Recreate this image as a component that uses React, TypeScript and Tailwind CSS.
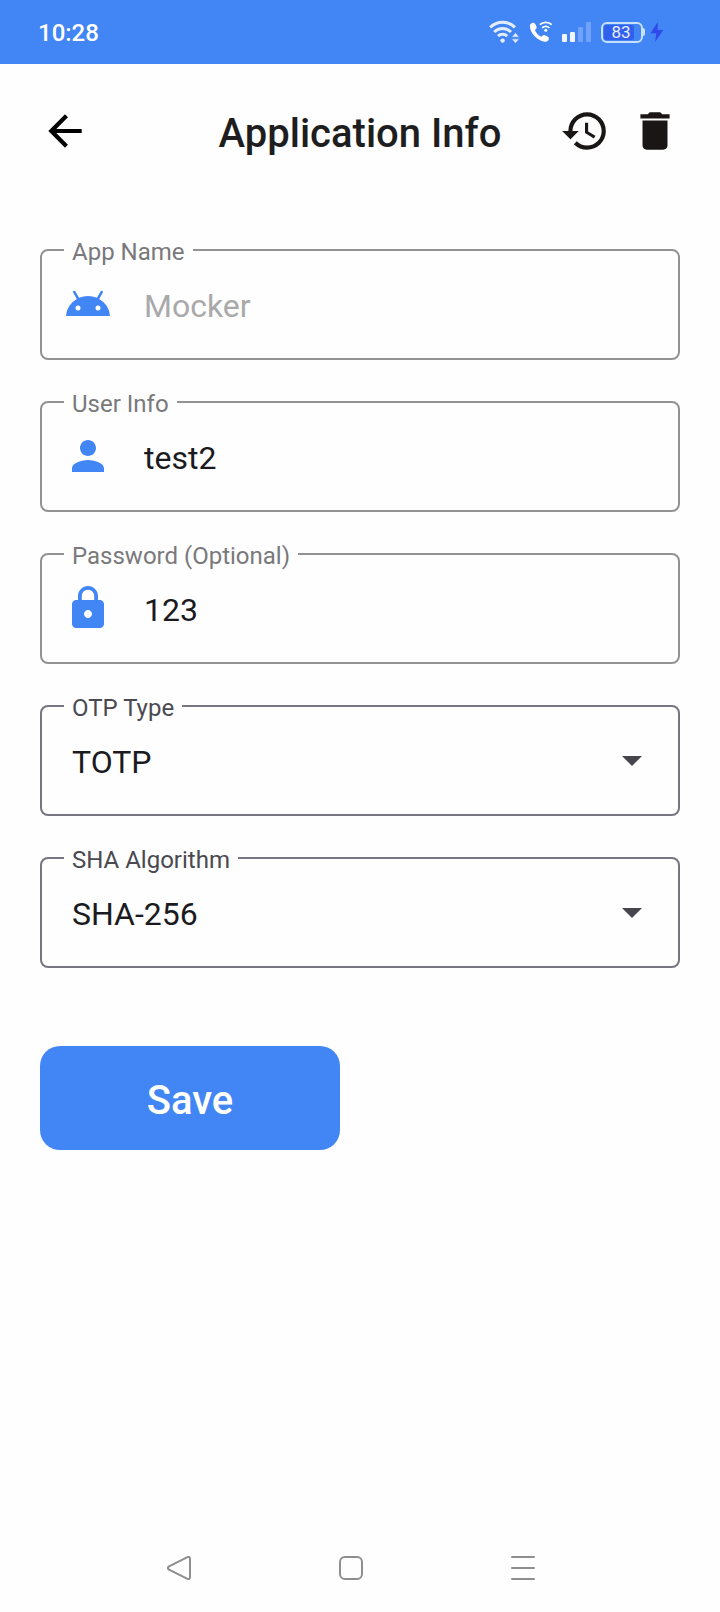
import { useId, useState, type ReactNode } from "react";
import {
  MdAndroid,
  MdArrowBack,
  MdArrowDropDown,
  MdDelete,
  MdHistory,
  MdLock,
  MdPerson,
} from "react-icons/md";

function WifiIcon() {
  return (
    <svg width="32" height="24" viewBox="0 0 32 24" fill="none" aria-hidden="true">
      <g stroke="#e3edfe" strokeWidth="3">
        <path d="M1.2 7.4a17.6 17.6 0 0 1 24.8 0" />
        <path d="M5.2 12a12 12 0 0 1 16.8 0" />
        <path d="M9 16.2a6.6 6.6 0 0 1 9.2 0" />
      </g>
      <circle cx="13.6" cy="20.6" r="2.2" fill="#e3edfe" />
      <path
        d="M26.5 12.6 30.6 17.2h-8.2zM26.5 23.4l4.1-4.6h-8.2z"
        fill="#e3edfe"
        stroke="#4285f4"
        strokeWidth="0.8"
      />
    </svg>
  );
}

function WifiCallIcon() {
  return (
    <svg width="24" height="24" viewBox="0 0 24 24" fill="none" aria-hidden="true">
      <path
        d="M1.2 4.6C2.2 3.2 3.6 2.4 4.8 2.8c1.2.5 2.4 2.7 2.8 4.4.3 1.2-.9 2.2-1.7 3 1.4 3 3.6 5.2 6.6 6.6.9-.9 2-2 3.2-1.6 1.6.4 3.6 1.5 4.1 2.6.5 1.3-.7 2.9-2 3.6C11.5 23.4-.8 13.3 1.2 4.6z"
        fill="#fff"
      />
      <g stroke="#fff" strokeWidth="1.8">
        <path d="M10.8 4.6a9 9 0 0 1 12 0" />
        <path d="M13.2 7.8a5.4 5.4 0 0 1 7.2 0" />
      </g>
      <circle cx="16.8" cy="10.2" r="1.5" fill="#fff" />
    </svg>
  );
}

function SignalIcon() {
  return (
    <svg width="30" height="24" viewBox="0 0 30 24" aria-hidden="true">
      <rect x="0" y="14" width="5" height="8" rx="1" fill="#f0f5ff" />
      <rect x="8" y="12" width="5" height="10" rx="1" fill="#f0f5ff" />
      <rect x="16" y="7" width="5" height="15" rx="1" fill="#6fa2f8" />
      <rect x="24" y="2" width="5" height="20" rx="1" fill="#6fa2f8" />
    </svg>
  );
}

function Battery({ level }: { level: number }) {
  return (
    <div className="flex items-center">
      <div className="flex h-[21px] w-[42px] items-center rounded-md border-2 border-[#c8e0fc] px-px">
        <span className="flex h-[15px] w-[30px] items-center justify-center rounded-xs bg-[#3260ee] pl-1 text-[17px] leading-4 text-[#e6effe]">
          {level}
        </span>
      </div>
      <div className="h-2 w-0.5 rounded-r-xs bg-[#c8e0fc]" />
    </div>
  );
}

function BoltIcon() {
  return (
    <svg width="14" height="22" viewBox="0 0 14 22" aria-hidden="true">
      <path d="M7.8 1 .5 12.2h5.7L5 21l8.3-12H7.6z" fill="#3049ec" />
    </svg>
  );
}

function StatusBar() {
  return (
    <div className="flex h-16 items-center justify-between bg-[#4285f4] pr-14 pl-[38px] text-white">
      <span className="pt-0.5 text-2xl font-medium">10:28</span>
      <div className="flex items-center">
        <WifiIcon />
        <span className="w-2" />
        <WifiCallIcon />
        <span className="w-[9px]" />
        <SignalIcon />
        <span className="w-[9px]" />
        <Battery level={83} />
        <span className="w-[5px]" />
        <BoltIcon />
      </div>
    </div>
  );
}

function Outline({
  id,
  label,
  tone,
  children,
}: {
  id: string;
  label: string;
  tone: string;
  children: ReactNode;
}) {
  return (
    <fieldset className={`min-w-0 rounded-lg border-2 px-[22px] pb-3.5 ${tone}`}>
      <legend className="px-2 pt-1 text-2xl leading-6">
        <label htmlFor={id}>{label}</label>
      </legend>
      {children}
    </fieldset>
  );
}

function TextField({
  label,
  icon,
  initial,
  disabled = false,
}: {
  label: string;
  icon: ReactNode;
  initial: string;
  disabled?: boolean;
}) {
  const id = useId();
  const [value, setValue] = useState(initial);
  return (
    <Outline id={id} label={label} tone="border-[#929294] text-[#79797b]">
      <div className="flex h-20 items-center gap-8">
        <span className="shrink-0 text-5xl text-[#4285f4]">{icon}</span>
        <input
          id={id}
          type="text"
          value={value}
          disabled={disabled}
          onChange={(e) => setValue(e.target.value)}
          className="h-12 w-full min-w-0 bg-transparent pt-1 text-[32px] text-[#1b1b1f] outline-none disabled:text-[#a9a9ab]"
        />
      </div>
    </Outline>
  );
}

function SelectField({
  label,
  options,
  initial,
}: {
  label: string;
  options: string[];
  initial: string;
}) {
  const id = useId();
  const [value, setValue] = useState(initial);
  return (
    <Outline id={id} label={label} tone="border-[#777680] text-[#4a4950]">
      <div className="grid h-20 items-center">
        <select
          id={id}
          value={value}
          onChange={(e) => setValue(e.target.value)}
          className="col-start-1 row-start-1 h-12 w-full appearance-none bg-transparent pt-0.5 pr-12 pl-2 text-[32px] text-[#1b1b1f] outline-none"
        >
          {options.map((o) => (
            <option key={o}>{o}</option>
          ))}
        </select>
        <MdArrowDropDown className="pointer-events-none col-start-1 row-start-1 size-12 justify-self-end text-[#47464f]" />
      </div>
    </Outline>
  );
}

export default function App() {
  return (
    <div className="flex min-h-screen flex-col bg-[#fefefe] font-[Roboto,sans-serif]">
      <StatusBar />
      <header className="grid grid-cols-[1fr_auto_1fr] items-center px-10 pt-[42px]">
        <button type="button" aria-label="Back" className="justify-self-start text-black">
          <MdArrowBack className="size-[50px]" />
        </button>
        <h1 className="pt-1.5 text-[40px] leading-[44px] font-medium text-[#1e1e20]">
          Application Info
        </h1>
        <div className="flex gap-5 justify-self-end text-[#1a1616]">
          <button type="button" aria-label="History">
            <MdHistory className="size-[50px]" />
          </button>
          <button type="button" aria-label="Delete">
            <MdDelete className="size-[50px]" />
          </button>
        </div>
      </header>
      <form
        className="flex flex-col gap-7 px-10 pt-20"
        onSubmit={(e) => e.preventDefault()}
      >
        <TextField label="App Name" icon={<MdAndroid />} initial="Mocker" disabled />
        <TextField label="User Info" icon={<MdPerson />} initial="test2" />
        <TextField label="Password (Optional)" icon={<MdLock />} initial="123" />
        <SelectField label="OTP Type" options={["TOTP", "HOTP"]} initial="TOTP" />
        <SelectField
          label="SHA Algorithm"
          options={["SHA-1", "SHA-256", "SHA-512"]}
          initial="SHA-256"
        />
        <button
          type="submit"
          className="mt-[50px] h-[104px] w-[300px] rounded-[20px] bg-[#4285f4] pt-1.5 text-[40px] font-medium text-white"
        >
          Save
        </button>
      </form>
      <nav className="mt-auto flex h-[88px] items-center justify-center gap-[148px] pr-[18px] text-[#8e8e8e]">
        <button type="button" aria-label="System back">
          <svg width="24" height="24" viewBox="0 0 24 24" fill="none" stroke="currentColor" strokeWidth="2">
            <path d="M2 10.4 20 1.3Q23 0 23 3v18q0 3-3 1.7L2 13.6q-2.2-1.6 0-3.2z" />
          </svg>
        </button>
        <button type="button" aria-label="Home">
          <svg width="24" height="24" viewBox="0 0 24 24" fill="none" stroke="currentColor" strokeWidth="2">
            <rect x="1" y="1" width="22" height="22" rx="5" />
          </svg>
        </button>
        <button type="button" aria-label="Recent apps">
          <svg width="24" height="24" viewBox="0 0 24 24" fill="none" stroke="currentColor" strokeWidth="2" strokeLinecap="round">
            <path d="M1 1h22M1 12h22M1 23h22" />
          </svg>
        </button>
      </nav>
    </div>
  );
}
